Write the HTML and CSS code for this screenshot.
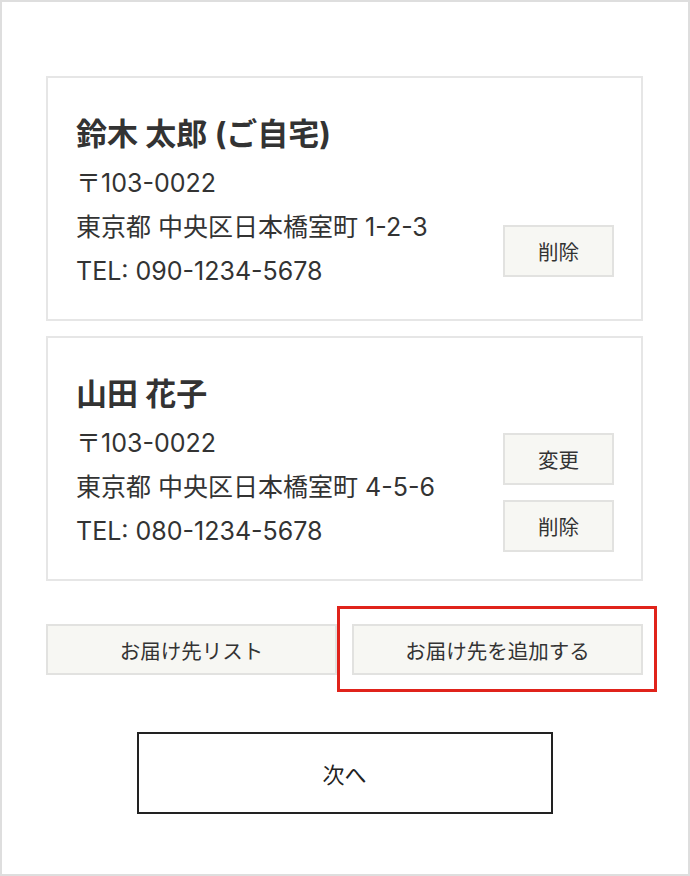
FILE: index.html
```html
<!DOCTYPE html>
<html lang="ja">
<head>
<meta charset="utf-8">
<title>お届け先</title>
<link rel="stylesheet" href="styles.css">
</head>
<body>
<div class="frame">
  <div class="card card--home">
    <div class="info">
      <p class="name">鈴木 太郎 (ご自宅)</p>
      <p class="line">〒103-0022</p>
      <p class="line">東京都 中央区日本橋室町 1-2-3</p>
      <p class="line">TEL: 090-1234-5678</p>
    </div>
    <div class="actions">
      <button class="btn-sm">削除</button>
    </div>
  </div>
  <div class="card card--other">
    <div class="info">
      <p class="name">山田 花子</p>
      <p class="line">〒103-0022</p>
      <p class="line">東京都 中央区日本橋室町 4-5-6</p>
      <p class="line">TEL: 080-1234-5678</p>
    </div>
    <div class="actions">
      <button class="btn-sm">変更</button>
      <button class="btn-sm">削除</button>
    </div>
  </div>
  <div class="row">
    <button class="btn-wide">お届け先リスト</button>
    <div class="hl-wrap">
      <button class="btn-wide">お届け先を追加する</button>
      <span class="highlight"></span>
    </div>
  </div>
  <div class="next-wrap">
    <button class="btn-next">次へ</button>
  </div>
</div>
</body>
</html>
```
FILE: styles.css
```css
* { box-sizing: border-box; }
html, body { margin: 0; padding: 0; background: #fff; }
body {
  font-family: Inter, "Noto Sans CJK JP", sans-serif;
  color: #333;
}
.frame {
  width: 690px;
  height: 876px;
  border: 2px solid #dedede;
  padding: 74px 45px 0 44px;
}
.card {
  display: flex;
  justify-content: space-between;
  border: 2px solid #e6e6e6;
  padding: 29px 27px 26px 28px;
}
.card + .card { margin-top: 15px; }
.info p { margin: 0; }
.name {
  font-size: 31px;
  font-weight: 700;
  line-height: 54px;
  color: #333;
}
.line {
  font-size: 25px;
  line-height: 44px;
  color: #333;
}
.actions {
  display: flex;
  flex-direction: column;
  gap: 15px;
  align-self: flex-end;
}
.card--home .actions { margin-bottom: 16px; }
.card--other .actions { margin-bottom: 1px; }
button {
  font-family: "Noto Sans CJK JP", sans-serif;
  color: #333;
  cursor: pointer;
}
.btn-sm {
  width: 111px;
  height: 52px;
  background: #f7f7f3;
  border: 2px solid #e2e2e0;
  font-size: 20.5px;
  padding: 0;
}
.row {
  margin-top: 43px;
  display: grid;
  grid-template-columns: 1fr 1fr;
  gap: 15px;
}
.btn-wide {
  width: 100%;
  height: 51px;
  background: #f7f7f3;
  border: 2px solid #e2e2e0;
  font-size: 20.5px;
  padding: 0;
}
.hl-wrap { position: relative; }
.highlight {
  position: absolute;
  top: -18px;
  bottom: -17px;
  left: -15px;
  right: -14px;
  border: 3px solid #e0231b;
  pointer-events: none;
}
.next-wrap {
  margin-top: 57px;
  display: flex;
  justify-content: center;
}
.btn-next {
  width: 416px;
  height: 82px;
  background: #fff;
  border: 2px solid #222;
  font-size: 22px;
  color: #222;
  padding: 0;
}
```
